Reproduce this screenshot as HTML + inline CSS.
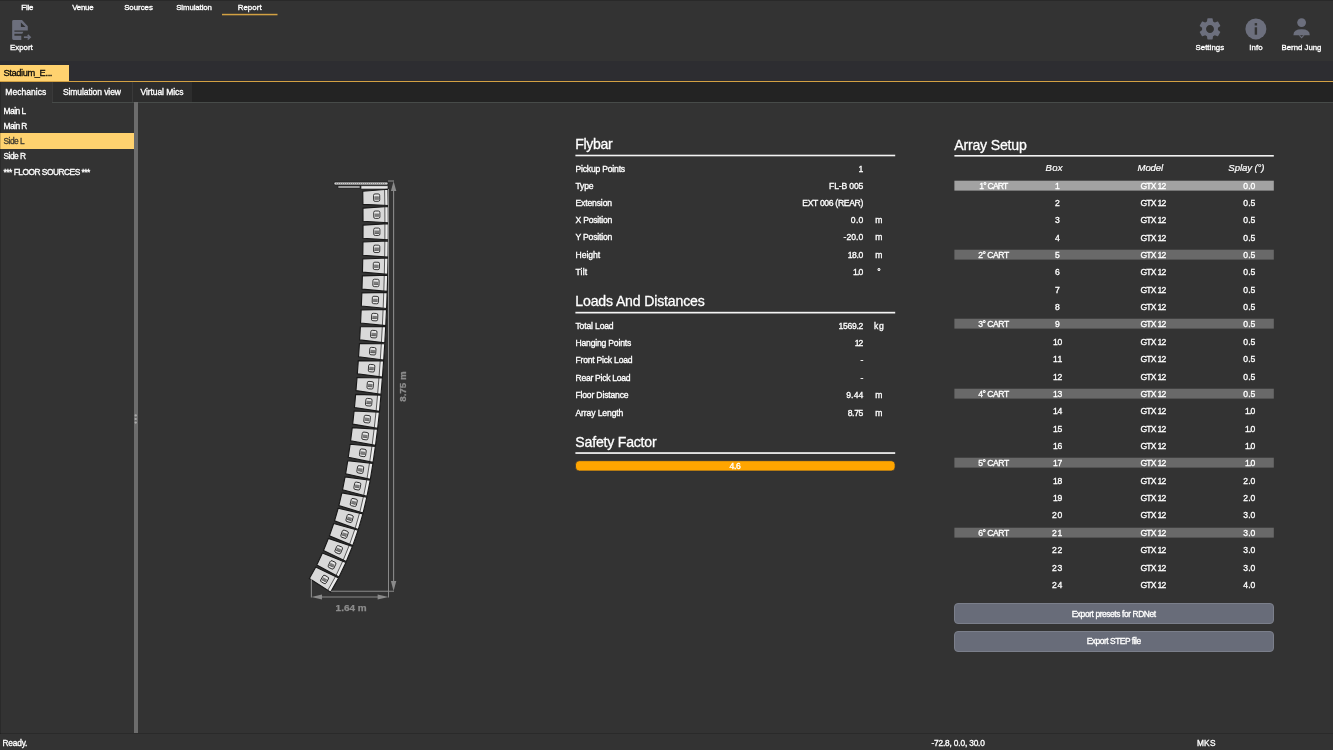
<!DOCTYPE html>
<html><head><meta charset="utf-8"><title>Report</title>
<style>
*{box-sizing:border-box;margin:0;padding:0}
html,body{width:1333px;height:750px;overflow:hidden;background:#333333}
body{font-family:"Liberation Sans",sans-serif;color:#fff;font-size:8px;position:relative}
#app{position:absolute;left:0;top:0;width:1333px;height:750px;will-change:transform;background:#333333}
.abs{position:absolute}
#docbar{left:0;top:61px;width:1333px;height:20px;background:#2d2d31}
#doctab{left:0;top:65px;width:69px;height:17px;background:#ffd26f}
#orange{left:0;top:81px;width:1333px;height:1px;background:#d3a143}
#subbar{left:0;top:82px;width:1333px;height:20px;background:#232323}
.stab{top:82px;height:20px;background:#2d2d2d;border-left:1px solid #3a3a3a}
.stab.act{background:#333333;height:21px;border:0}
#subline{left:52px;top:102px;width:1281px;height:1px;background:#474b49}
#sel{left:0;top:133px;width:134px;height:16px;background:#ffd26f}
#split{left:134px;top:102px;width:4px;height:632px;background:#6c6c6c}
#statline{left:0;top:733px;width:1333px;height:1px;background:#2a2a2a}
#sf{left:575px;top:461px;width:320px;height:10px;border-radius:4px;background:#ffa500}
.btn{position:absolute;left:954px;width:320px;height:21px;border-radius:4px;background:#686c79;border:1px solid #7b7f8b}
svg{position:absolute;left:0;top:0}
</style></head><body><div id="app">

<div id="docbar" class="abs"></div>
<div id="doctab" class="abs"></div>
<div id="orange" class="abs"></div>
<div id="subbar" class="abs"></div>
<div class="abs stab act" style="left:0;width:52px"></div>
<div class="abs stab" style="left:52px;width:80px"></div>
<div class="abs stab" style="left:132px;width:60px"></div>
<div id="subline" class="abs"></div>
<div id="sel" class="abs"></div>
<div id="split" class="abs"></div>
<div id="statline" class="abs"></div>
<div class="btn" style="top:603px"></div>
<div class="btn" style="top:631px"></div>

<svg width="1333" height="750" viewBox="0 0 1333 750" font-family="Liberation Sans, sans-serif">
 <!-- top dark edge -->
 <rect x="0" y="0" width="1333" height="0.7" fill="#262626"/>
 <!-- report underline -->
 <rect x="222" y="13.8" width="55.5" height="1.5" fill="#d3a143"/>
 <!-- left dark edge -->
 <rect x="0" y="82" width="0.7" height="652" fill="#000" opacity="0.25"/>
 <!-- splitter dots -->
 <ellipse cx="135.7" cy="415.4" rx="1.25" ry="1.05" fill="#aaaaaa"/>
 <ellipse cx="135.7" cy="419" rx="1.25" ry="1.05" fill="#aaaaaa"/>
 <ellipse cx="135.7" cy="422.6" rx="1.25" ry="1.05" fill="#aaaaaa"/>

 <!-- export icon -->
 <path fill="#6c6f7d" d="M13.6 19.9 H22 L27.8 26.2 V30.4 H14.4 V31.7 H23.3 L22.3 33.7 H14.4 V35.8 H21.3 V39.9 H13.6 Q12.16 39.9 12.16 38.5 V21.3 Q12.16 19.9 13.6 19.9 Z"/>
 <path d="M20.9 22.4 V27 H25.5 Z" fill="#2f2f30"/>
 <path d="M23.9 37.2 H29.6" stroke="#6c6f7d" stroke-width="1.7" fill="none"/>
 <path d="M27.7 34.9 L30.2 37.2 L27.7 39.5" stroke="#6c6f7d" stroke-width="1.5" fill="none" stroke-linejoin="miter"/>

 <!-- settings gear -->
 <g transform="translate(1196.75 15.65) scale(1.105)">
 <path fill="#6c6f7d" d="M19.14 12.94c.04-.3.06-.61.06-.94 0-.32-.02-.64-.07-.94l2.03-1.58a.49.49 0 0 0 .12-.61l-1.92-3.32a.488.488 0 0 0-.59-.22l-2.39.96c-.5-.38-1.03-.7-1.62-.94l-.36-2.54a.484.484 0 0 0-.48-.41h-3.84c-.24 0-.43.17-.47.41l-.36 2.54c-.59.24-1.13.57-1.62.94l-2.39-.96c-.22-.08-.47 0-.59.22L2.74 8.87c-.12.21-.08.47.12.61l2.03 1.58c-.05.3-.09.63-.09.94s.02.64.07.94l-2.03 1.58a.49.49 0 0 0-.12.61l1.92 3.32c.12.22.37.29.59.22l2.39-.96c.5.38 1.03.7 1.62.94l.36 2.54c.05.24.24.41.48.41h3.84c.24 0 .44-.17.47-.41l.36-2.54c.59-.24 1.13-.56 1.62-.94l2.39.96c.22.08.47 0 .59-.22l1.92-3.32c.12-.22.07-.47-.12-.61l-2.01-1.58zM12 15.6c-1.98 0-3.6-1.62-3.6-3.6s1.62-3.6 3.6-3.6 3.6 1.62 3.6 3.6-1.62 3.6-3.6 3.6z"/>
 </g>
 <!-- info -->
 <circle cx="1255.9" cy="28.9" r="10.5" fill="#6c6f7d"/>
 <rect x="1254.7" y="27.3" width="2.4" height="7.4" fill="#333"/>
 <rect x="1254.7" y="23.1" width="2.4" height="2.4" fill="#333"/>
 <!-- user -->
 <circle cx="1301.6" cy="22.6" r="4.4" fill="#6c6f7d"/>
 <path d="M1293.4 35.2 Q1293.4 29.3 1301.6 29.3 Q1309.8 29.3 1309.8 35.2 Z" fill="#6c6f7d"/>
 <path d="M1298.6 35.2 H1304.6 L1301.6 38.4 Z" fill="#6c6f7d"/>
 <path d="M1300.1 35.2 H1303.1 L1301.6 36.9 Z" fill="#333"/>

 <!-- flybar -->
 <rect x="334" y="182" width="54" height="3" rx="1.2" fill="#cfcfcf" stroke="#1c1c1c" stroke-width="0.8"/>
 <line x1="336" y1="183.5" x2="386" y2="183.5" stroke="#888" stroke-width="0.8" stroke-dasharray="1 1"/>
 <rect x="361" y="185.8" width="27" height="3.2" fill="#e6e6e6" stroke="#1c1c1c" stroke-width="0.6"/>
 <rect x="338" y="186" width="22" height="2" fill="#d0d0d0" stroke="#1c1c1c" stroke-width="0.6"/>
 <polygon points="388.00,189.30 388.23,205.55 362.91,204.35 362.73,191.20" fill="#d9d9d9"/>
<polygon points="388.00,189.30 388.23,205.55 384.83,205.39 384.61,189.56" fill="#ececec"/>
<line x1="384.61" y1="189.56" x2="384.83" y2="205.39" stroke="#2a2a2a" stroke-width="0.75"/>
<polygon points="388.00,189.30 388.23,205.55 362.91,204.35 362.73,191.20" fill="none" stroke="#181818" stroke-width="1.15" stroke-linejoin="round"/>
<g transform="translate(376.62 197.63) rotate(-0.80)"><rect x="-3.1" y="-3.7" width="6.2" height="7.4" rx="1.5" fill="#e6e6e6" stroke="#1e1e1e" stroke-width="0.85"/><rect x="-2.3" y="-1.3" width="4.6" height="2.9" rx="0.5" fill="#7c7c7c"/><rect x="-2.3" y="1.3" width="4.6" height="0.6" fill="#444"/></g>
<polygon points="388.24,206.47 388.33,222.72 363.02,221.30 362.95,208.15" fill="#d9d9d9"/>
<polygon points="388.24,206.47 388.33,222.72 384.93,222.53 384.84,206.69" fill="#ececec"/>
<line x1="384.84" y1="206.69" x2="384.93" y2="222.53" stroke="#2a2a2a" stroke-width="0.75"/>
<polygon points="388.24,206.47 388.33,222.72 363.02,221.30 362.95,208.15" fill="none" stroke="#181818" stroke-width="1.15" stroke-linejoin="round"/>
<g transform="translate(376.78 214.70) rotate(-0.30)"><rect x="-3.1" y="-3.7" width="6.2" height="7.4" rx="1.5" fill="#e6e6e6" stroke="#1e1e1e" stroke-width="0.85"/><rect x="-2.3" y="-1.3" width="4.6" height="2.9" rx="0.5" fill="#7c7c7c"/><rect x="-2.3" y="1.3" width="4.6" height="0.6" fill="#444"/></g>
<polygon points="388.33,223.64 388.27,239.89 362.98,238.25 363.02,225.10" fill="#d9d9d9"/>
<polygon points="388.33,223.64 388.27,239.89 384.87,239.67 384.93,223.83" fill="#ececec"/>
<line x1="384.93" y1="223.83" x2="384.87" y2="239.67" stroke="#2a2a2a" stroke-width="0.75"/>
<polygon points="388.33,223.64 388.27,239.89 362.98,238.25 363.02,225.10" fill="none" stroke="#181818" stroke-width="1.15" stroke-linejoin="round"/>
<g transform="translate(376.80 231.77) rotate(0.20)"><rect x="-3.1" y="-3.7" width="6.2" height="7.4" rx="1.5" fill="#e6e6e6" stroke="#1e1e1e" stroke-width="0.85"/><rect x="-2.3" y="-1.3" width="4.6" height="2.9" rx="0.5" fill="#7c7c7c"/><rect x="-2.3" y="1.3" width="4.6" height="0.6" fill="#444"/></g>
<polygon points="388.27,240.81 388.07,257.06 362.79,255.20 362.95,242.05" fill="#d9d9d9"/>
<polygon points="388.27,240.81 388.07,257.06 384.67,256.81 384.86,240.97" fill="#ececec"/>
<line x1="384.86" y1="240.97" x2="384.67" y2="256.81" stroke="#2a2a2a" stroke-width="0.75"/>
<polygon points="388.27,240.81 388.07,257.06 362.79,255.20 362.95,242.05" fill="none" stroke="#181818" stroke-width="1.15" stroke-linejoin="round"/>
<g transform="translate(376.67 248.84) rotate(0.70)"><rect x="-3.1" y="-3.7" width="6.2" height="7.4" rx="1.5" fill="#e6e6e6" stroke="#1e1e1e" stroke-width="0.85"/><rect x="-2.3" y="-1.3" width="4.6" height="2.9" rx="0.5" fill="#7c7c7c"/><rect x="-2.3" y="1.3" width="4.6" height="0.6" fill="#444"/></g>
<polygon points="388.05,257.98 387.71,274.22 362.45,272.15 362.73,258.99" fill="#d9d9d9"/>
<polygon points="388.05,257.98 387.71,274.22 384.32,273.94 384.65,258.11" fill="#ececec"/>
<line x1="384.65" y1="258.11" x2="384.32" y2="273.94" stroke="#2a2a2a" stroke-width="0.75"/>
<polygon points="388.05,257.98 387.71,274.22 362.45,272.15 362.73,258.99" fill="none" stroke="#181818" stroke-width="1.15" stroke-linejoin="round"/>
<g transform="translate(376.38 265.91) rotate(1.20)"><rect x="-3.1" y="-3.7" width="6.2" height="7.4" rx="1.5" fill="#e6e6e6" stroke="#1e1e1e" stroke-width="0.85"/><rect x="-2.3" y="-1.3" width="4.6" height="2.9" rx="0.5" fill="#7c7c7c"/><rect x="-2.3" y="1.3" width="4.6" height="0.6" fill="#444"/></g>
<polygon points="387.69,275.14 387.21,291.39 361.97,289.09 362.36,275.94" fill="#d9d9d9"/>
<polygon points="387.69,275.14 387.21,291.39 383.82,291.08 384.29,275.25" fill="#ececec"/>
<line x1="384.29" y1="275.25" x2="383.82" y2="291.08" stroke="#2a2a2a" stroke-width="0.75"/>
<polygon points="387.69,275.14 387.21,291.39 361.97,289.09 362.36,275.94" fill="none" stroke="#181818" stroke-width="1.15" stroke-linejoin="round"/>
<g transform="translate(375.95 282.97) rotate(1.70)"><rect x="-3.1" y="-3.7" width="6.2" height="7.4" rx="1.5" fill="#e6e6e6" stroke="#1e1e1e" stroke-width="0.85"/><rect x="-2.3" y="-1.3" width="4.6" height="2.9" rx="0.5" fill="#7c7c7c"/><rect x="-2.3" y="1.3" width="4.6" height="0.6" fill="#444"/></g>
<polygon points="387.18,292.31 386.56,308.54 361.33,306.03 361.84,292.88" fill="#d9d9d9"/>
<polygon points="387.18,292.31 386.56,308.54 383.17,308.20 383.77,292.38" fill="#ececec"/>
<line x1="383.77" y1="292.38" x2="383.17" y2="308.20" stroke="#2a2a2a" stroke-width="0.75"/>
<polygon points="387.18,292.31 386.56,308.54 361.33,306.03 361.84,292.88" fill="none" stroke="#181818" stroke-width="1.15" stroke-linejoin="round"/>
<g transform="translate(375.37 300.03) rotate(2.20)"><rect x="-3.1" y="-3.7" width="6.2" height="7.4" rx="1.5" fill="#e6e6e6" stroke="#1e1e1e" stroke-width="0.85"/><rect x="-2.3" y="-1.3" width="4.6" height="2.9" rx="0.5" fill="#7c7c7c"/><rect x="-2.3" y="1.3" width="4.6" height="0.6" fill="#444"/></g>
<polygon points="386.52,309.46 385.75,325.69 360.55,322.96 361.17,309.82" fill="#d9d9d9"/>
<polygon points="386.52,309.46 385.75,325.69 382.37,325.33 383.11,309.51" fill="#ececec"/>
<line x1="383.11" y1="309.51" x2="382.37" y2="325.33" stroke="#2a2a2a" stroke-width="0.75"/>
<polygon points="386.52,309.46 385.75,325.69 360.55,322.96 361.17,309.82" fill="none" stroke="#181818" stroke-width="1.15" stroke-linejoin="round"/>
<g transform="translate(374.65 317.09) rotate(2.70)"><rect x="-3.1" y="-3.7" width="6.2" height="7.4" rx="1.5" fill="#e6e6e6" stroke="#1e1e1e" stroke-width="0.85"/><rect x="-2.3" y="-1.3" width="4.6" height="2.9" rx="0.5" fill="#7c7c7c"/><rect x="-2.3" y="1.3" width="4.6" height="0.6" fill="#444"/></g>
<polygon points="385.71,326.61 384.80,342.84 359.63,339.88 360.36,326.75" fill="#d9d9d9"/>
<polygon points="385.71,326.61 384.80,342.84 381.42,342.44 382.30,326.63" fill="#ececec"/>
<line x1="382.30" y1="326.63" x2="381.42" y2="342.44" stroke="#2a2a2a" stroke-width="0.75"/>
<polygon points="385.71,326.61 384.80,342.84 359.63,339.88 360.36,326.75" fill="none" stroke="#181818" stroke-width="1.15" stroke-linejoin="round"/>
<g transform="translate(373.77 334.13) rotate(3.20)"><rect x="-3.1" y="-3.7" width="6.2" height="7.4" rx="1.5" fill="#e6e6e6" stroke="#1e1e1e" stroke-width="0.85"/><rect x="-2.3" y="-1.3" width="4.6" height="2.9" rx="0.5" fill="#7c7c7c"/><rect x="-2.3" y="1.3" width="4.6" height="0.6" fill="#444"/></g>
<polygon points="384.75,343.76 383.70,359.97 358.55,356.80 359.40,343.67" fill="#d9d9d9"/>
<polygon points="384.75,343.76 383.70,359.97 380.32,359.55 381.34,343.74" fill="#ececec"/>
<line x1="381.34" y1="343.74" x2="380.32" y2="359.55" stroke="#2a2a2a" stroke-width="0.75"/>
<polygon points="384.75,343.76 383.70,359.97 358.55,356.80 359.40,343.67" fill="none" stroke="#181818" stroke-width="1.15" stroke-linejoin="round"/>
<g transform="translate(372.74 351.17) rotate(3.70)"><rect x="-3.1" y="-3.7" width="6.2" height="7.4" rx="1.5" fill="#e6e6e6" stroke="#1e1e1e" stroke-width="0.85"/><rect x="-2.3" y="-1.3" width="4.6" height="2.9" rx="0.5" fill="#7c7c7c"/><rect x="-2.3" y="1.3" width="4.6" height="0.6" fill="#444"/></g>
<polygon points="383.63,360.89 382.44,377.10 357.33,373.70 358.29,360.58" fill="#d9d9d9"/>
<polygon points="383.63,360.89 382.44,377.10 379.07,376.64 380.23,360.85" fill="#ececec"/>
<line x1="380.23" y1="360.85" x2="379.07" y2="376.64" stroke="#2a2a2a" stroke-width="0.75"/>
<polygon points="383.63,360.89 382.44,377.10 357.33,373.70 358.29,360.58" fill="none" stroke="#181818" stroke-width="1.15" stroke-linejoin="round"/>
<g transform="translate(371.57 368.20) rotate(4.20)"><rect x="-3.1" y="-3.7" width="6.2" height="7.4" rx="1.5" fill="#e6e6e6" stroke="#1e1e1e" stroke-width="0.85"/><rect x="-2.3" y="-1.3" width="4.6" height="2.9" rx="0.5" fill="#7c7c7c"/><rect x="-2.3" y="1.3" width="4.6" height="0.6" fill="#444"/></g>
<polygon points="382.37,378.01 381.04,394.21 355.95,390.59 357.03,377.48" fill="#d9d9d9"/>
<polygon points="382.37,378.01 381.04,394.21 377.67,393.72 378.97,377.94" fill="#ececec"/>
<line x1="378.97" y1="377.94" x2="377.67" y2="393.72" stroke="#2a2a2a" stroke-width="0.75"/>
<polygon points="382.37,378.01 381.04,394.21 355.95,390.59 357.03,377.48" fill="none" stroke="#181818" stroke-width="1.15" stroke-linejoin="round"/>
<g transform="translate(370.24 385.22) rotate(4.70)"><rect x="-3.1" y="-3.7" width="6.2" height="7.4" rx="1.5" fill="#e6e6e6" stroke="#1e1e1e" stroke-width="0.85"/><rect x="-2.3" y="-1.3" width="4.6" height="2.9" rx="0.5" fill="#7c7c7c"/><rect x="-2.3" y="1.3" width="4.6" height="0.6" fill="#444"/></g>
<polygon points="380.96,395.13 379.49,411.31 354.44,407.48 355.63,394.37" fill="#d9d9d9"/>
<polygon points="380.96,395.13 379.49,411.31 376.13,410.79 377.56,395.02" fill="#ececec"/>
<line x1="377.56" y1="395.02" x2="376.13" y2="410.79" stroke="#2a2a2a" stroke-width="0.75"/>
<polygon points="380.96,395.13 379.49,411.31 354.44,407.48 355.63,394.37" fill="none" stroke="#181818" stroke-width="1.15" stroke-linejoin="round"/>
<g transform="translate(368.77 402.23) rotate(5.20)"><rect x="-3.1" y="-3.7" width="6.2" height="7.4" rx="1.5" fill="#e6e6e6" stroke="#1e1e1e" stroke-width="0.85"/><rect x="-2.3" y="-1.3" width="4.6" height="2.9" rx="0.5" fill="#7c7c7c"/><rect x="-2.3" y="1.3" width="4.6" height="0.6" fill="#444"/></g>
<polygon points="379.40,412.22 377.65,428.38 352.66,424.11 354.08,411.03" fill="#d9d9d9"/>
<polygon points="379.40,412.22 377.65,428.38 374.29,427.81 376.00,412.06" fill="#ececec"/>
<line x1="376.00" y1="412.06" x2="374.29" y2="427.81" stroke="#2a2a2a" stroke-width="0.75"/>
<polygon points="379.40,412.22 377.65,428.38 352.66,424.11 354.08,411.03" fill="none" stroke="#181818" stroke-width="1.15" stroke-linejoin="round"/>
<g transform="translate(367.09 419.11) rotate(6.20)"><rect x="-3.1" y="-3.7" width="6.2" height="7.4" rx="1.5" fill="#e6e6e6" stroke="#1e1e1e" stroke-width="0.85"/><rect x="-2.3" y="-1.3" width="4.6" height="2.9" rx="0.5" fill="#7c7c7c"/><rect x="-2.3" y="1.3" width="4.6" height="0.6" fill="#444"/></g>
<polygon points="377.54,429.29 375.51,445.42 350.60,440.71 352.25,427.66" fill="#d9d9d9"/>
<polygon points="377.54,429.29 375.51,445.42 372.16,444.78 374.14,429.07" fill="#ececec"/>
<line x1="374.14" y1="429.07" x2="372.16" y2="444.78" stroke="#2a2a2a" stroke-width="0.75"/>
<polygon points="377.54,429.29 375.51,445.42 350.60,440.71 352.25,427.66" fill="none" stroke="#181818" stroke-width="1.15" stroke-linejoin="round"/>
<g transform="translate(365.11 435.96) rotate(7.20)"><rect x="-3.1" y="-3.7" width="6.2" height="7.4" rx="1.5" fill="#e6e6e6" stroke="#1e1e1e" stroke-width="0.85"/><rect x="-2.3" y="-1.3" width="4.6" height="2.9" rx="0.5" fill="#7c7c7c"/><rect x="-2.3" y="1.3" width="4.6" height="0.6" fill="#444"/></g>
<polygon points="375.39,446.33 373.07,462.41 348.25,457.27 350.12,444.25" fill="#d9d9d9"/>
<polygon points="375.39,446.33 373.07,462.41 369.73,461.72 371.99,446.05" fill="#ececec"/>
<line x1="371.99" y1="446.05" x2="369.73" y2="461.72" stroke="#2a2a2a" stroke-width="0.75"/>
<polygon points="375.39,446.33 373.07,462.41 348.25,457.27 350.12,444.25" fill="none" stroke="#181818" stroke-width="1.15" stroke-linejoin="round"/>
<g transform="translate(362.84 452.78) rotate(8.20)"><rect x="-3.1" y="-3.7" width="6.2" height="7.4" rx="1.5" fill="#e6e6e6" stroke="#1e1e1e" stroke-width="0.85"/><rect x="-2.3" y="-1.3" width="4.6" height="2.9" rx="0.5" fill="#7c7c7c"/><rect x="-2.3" y="1.3" width="4.6" height="0.6" fill="#444"/></g>
<polygon points="372.93,463.32 370.33,479.36 345.61,473.79 347.71,460.80" fill="#d9d9d9"/>
<polygon points="372.93,463.32 370.33,479.36 367.01,478.61 369.54,462.98" fill="#ececec"/>
<line x1="369.54" y1="462.98" x2="367.01" y2="478.61" stroke="#2a2a2a" stroke-width="0.75"/>
<polygon points="372.93,463.32 370.33,479.36 345.61,473.79 347.71,460.80" fill="none" stroke="#181818" stroke-width="1.15" stroke-linejoin="round"/>
<g transform="translate(360.27 469.55) rotate(9.20)"><rect x="-3.1" y="-3.7" width="6.2" height="7.4" rx="1.5" fill="#e6e6e6" stroke="#1e1e1e" stroke-width="0.85"/><rect x="-2.3" y="-1.3" width="4.6" height="2.9" rx="0.5" fill="#7c7c7c"/><rect x="-2.3" y="1.3" width="4.6" height="0.6" fill="#444"/></g>
<polygon points="370.18,480.27 367.02,496.21 342.50,489.78 345.06,476.87" fill="#d9d9d9"/>
<polygon points="370.18,480.27 367.02,496.21 363.73,495.34 366.80,479.81" fill="#ececec"/>
<line x1="366.80" y1="479.81" x2="363.73" y2="495.34" stroke="#2a2a2a" stroke-width="0.75"/>
<polygon points="370.18,480.27 367.02,496.21 342.50,489.78 345.06,476.87" fill="none" stroke="#181818" stroke-width="1.15" stroke-linejoin="round"/>
<g transform="translate(357.31 486.05) rotate(11.20)"><rect x="-3.1" y="-3.7" width="6.2" height="7.4" rx="1.5" fill="#e6e6e6" stroke="#1e1e1e" stroke-width="0.85"/><rect x="-2.3" y="-1.3" width="4.6" height="2.9" rx="0.5" fill="#7c7c7c"/><rect x="-2.3" y="1.3" width="4.6" height="0.6" fill="#444"/></g>
<polygon points="366.83,497.11 363.12,512.93 338.84,505.65 341.85,492.84" fill="#d9d9d9"/>
<polygon points="366.83,497.11 363.12,512.93 359.86,511.95 363.47,496.54" fill="#ececec"/>
<line x1="363.47" y1="496.54" x2="359.86" y2="511.95" stroke="#2a2a2a" stroke-width="0.75"/>
<polygon points="366.83,497.11 363.12,512.93 338.84,505.65 341.85,492.84" fill="none" stroke="#181818" stroke-width="1.15" stroke-linejoin="round"/>
<g transform="translate(353.77 502.44) rotate(13.20)"><rect x="-3.1" y="-3.7" width="6.2" height="7.4" rx="1.5" fill="#e6e6e6" stroke="#1e1e1e" stroke-width="0.85"/><rect x="-2.3" y="-1.3" width="4.6" height="2.9" rx="0.5" fill="#7c7c7c"/><rect x="-2.3" y="1.3" width="4.6" height="0.6" fill="#444"/></g>
<polygon points="362.90,513.82 358.36,529.43 334.50,520.88 338.17,508.25" fill="#d9d9d9"/>
<polygon points="362.90,513.82 358.36,529.43 355.16,528.28 359.57,513.07" fill="#ececec"/>
<line x1="359.57" y1="513.07" x2="355.16" y2="528.28" stroke="#2a2a2a" stroke-width="0.75"/>
<polygon points="362.90,513.82 358.36,529.43 334.50,520.88 338.17,508.25" fill="none" stroke="#181818" stroke-width="1.15" stroke-linejoin="round"/>
<g transform="translate(349.57 518.46) rotate(16.20)"><rect x="-3.1" y="-3.7" width="6.2" height="7.4" rx="1.5" fill="#e6e6e6" stroke="#1e1e1e" stroke-width="0.85"/><rect x="-2.3" y="-1.3" width="4.6" height="2.9" rx="0.5" fill="#7c7c7c"/><rect x="-2.3" y="1.3" width="4.6" height="0.6" fill="#444"/></g>
<polygon points="358.09,530.31 352.75,545.65 329.36,535.87 333.69,523.45" fill="#d9d9d9"/>
<polygon points="358.09,530.31 352.75,545.65 349.60,544.34 354.81,529.38" fill="#ececec"/>
<line x1="354.81" y1="529.38" x2="349.60" y2="544.34" stroke="#2a2a2a" stroke-width="0.75"/>
<polygon points="358.09,530.31 352.75,545.65 329.36,535.87 333.69,523.45" fill="none" stroke="#181818" stroke-width="1.15" stroke-linejoin="round"/>
<g transform="translate(344.54 534.24) rotate(19.20)"><rect x="-3.1" y="-3.7" width="6.2" height="7.4" rx="1.5" fill="#e6e6e6" stroke="#1e1e1e" stroke-width="0.85"/><rect x="-2.3" y="-1.3" width="4.6" height="2.9" rx="0.5" fill="#7c7c7c"/><rect x="-2.3" y="1.3" width="4.6" height="0.6" fill="#444"/></g>
<polygon points="352.43,546.51 346.29,561.56 323.45,550.57 328.42,538.39" fill="#d9d9d9"/>
<polygon points="352.43,546.51 346.29,561.56 343.22,560.08 349.20,545.42" fill="#ececec"/>
<line x1="349.20" y1="545.42" x2="343.22" y2="560.08" stroke="#2a2a2a" stroke-width="0.75"/>
<polygon points="352.43,546.51 346.29,561.56 323.45,550.57 328.42,538.39" fill="none" stroke="#181818" stroke-width="1.15" stroke-linejoin="round"/>
<g transform="translate(338.69 549.74) rotate(22.20)"><rect x="-3.1" y="-3.7" width="6.2" height="7.4" rx="1.5" fill="#e6e6e6" stroke="#1e1e1e" stroke-width="0.85"/><rect x="-2.3" y="-1.3" width="4.6" height="2.9" rx="0.5" fill="#7c7c7c"/><rect x="-2.3" y="1.3" width="4.6" height="0.6" fill="#444"/></g>
<polygon points="345.93,562.41 339.01,577.11 316.78,564.94 322.38,553.03" fill="#d9d9d9"/>
<polygon points="345.93,562.41 339.01,577.11 336.02,575.47 342.76,561.15" fill="#ececec"/>
<line x1="342.76" y1="561.15" x2="336.02" y2="575.47" stroke="#2a2a2a" stroke-width="0.75"/>
<polygon points="345.93,562.41 339.01,577.11 316.78,564.94 322.38,553.03" fill="none" stroke="#181818" stroke-width="1.15" stroke-linejoin="round"/>
<g transform="translate(332.04 564.91) rotate(25.20)"><rect x="-3.1" y="-3.7" width="6.2" height="7.4" rx="1.5" fill="#e6e6e6" stroke="#1e1e1e" stroke-width="0.85"/><rect x="-2.3" y="-1.3" width="4.6" height="2.9" rx="0.5" fill="#7c7c7c"/><rect x="-2.3" y="1.3" width="4.6" height="0.6" fill="#444"/></g>
<polygon points="338.60,577.93 330.67,592.12 309.34,578.42 315.76,566.94" fill="#d9d9d9"/>
<polygon points="338.60,577.93 330.67,592.12 327.80,590.28 335.53,576.45" fill="#ececec"/>
<line x1="335.53" y1="576.45" x2="327.80" y2="590.28" stroke="#2a2a2a" stroke-width="0.75"/>
<polygon points="338.60,577.93 330.67,592.12 309.34,578.42 315.76,566.94" fill="none" stroke="#181818" stroke-width="1.15" stroke-linejoin="round"/>
<g transform="translate(324.57 579.46) rotate(29.20)"><rect x="-3.1" y="-3.7" width="6.2" height="7.4" rx="1.5" fill="#e6e6e6" stroke="#1e1e1e" stroke-width="0.85"/><rect x="-2.3" y="-1.3" width="4.6" height="2.9" rx="0.5" fill="#7c7c7c"/><rect x="-2.3" y="1.3" width="4.6" height="0.6" fill="#444"/></g>
 <!-- dims -->
 <g stroke="#8a8a8a" stroke-width="1.1" fill="none">
  <line x1="388" y1="181" x2="394" y2="181"/>
  <line x1="393.6" y1="188" x2="393.6" y2="583"/>
  <line x1="331" y1="591.3" x2="394" y2="591.3"/>
  <line x1="311.4" y1="579" x2="311.4" y2="597.5"/>
  <line x1="388.5" y1="189" x2="388.5" y2="597.5" stroke-width="1"/>
  <line x1="320" y1="597" x2="380" y2="597"/>
 </g>
 <g fill="#8a8a8a">
  <path d="M393.6 181.3 L396.3 191 L390.9 191 Z"/>
  <path d="M393.6 591 L396.3 581 L390.9 581 Z"/>
  <path d="M311.4 597 L322 594.6 L322 599.4 Z"/>
  <path d="M388.5 597 L377.6 594.6 L377.6 599.4 Z"/>
 </g>
 <text x="335.6" y="611" textLength="31" lengthAdjust="spacingAndGlyphs" font-weight="bold" font-size="8.8" fill="#8c8c8c" stroke="#8c8c8c" stroke-width="0.25">1.64 m</text>
 <text transform="translate(405.5 401.8) rotate(-90)" x="0" y="0" textLength="30.4" lengthAdjust="spacingAndGlyphs" font-weight="bold" font-size="8.8" fill="#8c8c8c" stroke="#8c8c8c" stroke-width="0.25">8.75 m</text>

 <rect x="575.5" y="460.7" width="319.6" height="10.3" rx="3.9" fill="#ffa500" stroke="#2b2e38" stroke-width="0.7"/>
 <!-- title underlines -->
 <rect x="575.4" y="154.7" width="319.8" height="1.6" fill="#f4f4f4"/>
 <rect x="575.4" y="311.8" width="319.8" height="1.7" fill="#f4f4f4"/>
 <rect x="575.4" y="452.2" width="319.8" height="1.7" fill="#f4f4f4"/>
 <rect x="954.4" y="155" width="319.4" height="1.6" fill="#f4f4f4"/>
 <rect x="954.4" y="180.70" width="319.4" height="9.9" fill="#a2a2a2"/>
<rect x="954.4" y="249.70" width="319.4" height="9.9" fill="#696969"/>
<rect x="954.4" y="318.70" width="319.4" height="9.9" fill="#696969"/>
<rect x="954.4" y="388.70" width="319.4" height="9.9" fill="#696969"/>
<rect x="954.4" y="457.70" width="319.4" height="9.9" fill="#696969"/>
<rect x="954.4" y="527.70" width="319.4" height="9.9" fill="#696969"/>
 <text x="21.25" textLength="12.20" lengthAdjust="spacing" y="10" font-size="7.85" fill="#fff" stroke="#fff" stroke-width="0.32" >File</text>
<text x="72.15" textLength="21.40" lengthAdjust="spacing" y="10" font-size="7.85" fill="#fff" stroke="#fff" stroke-width="0.32" >Venue</text>
<text x="124.15" textLength="28.70" lengthAdjust="spacing" y="10" font-size="7.85" fill="#fff" stroke="#fff" stroke-width="0.32" >Sources</text>
<text x="176.15" textLength="35.80" lengthAdjust="spacing" y="10" font-size="7.85" fill="#fff" stroke="#fff" stroke-width="0.32" >Simulation</text>
<text x="237.65" textLength="24.00" lengthAdjust="spacing" y="10" font-size="7.85" fill="#fff" stroke="#fff" stroke-width="0.32" >Report</text>
<text x="10.00" textLength="22.75" lengthAdjust="spacing" y="50" font-size="7.85" fill="#fff" stroke="#fff" stroke-width="0.32" >Export</text>
<text x="1195.45" textLength="28.70" lengthAdjust="spacing" y="50" font-size="7.85" fill="#fff" stroke="#fff" stroke-width="0.32" >Settings</text>
<text x="1249.35" textLength="13.20" lengthAdjust="spacing" y="50" font-size="7.85" fill="#fff" stroke="#fff" stroke-width="0.32" >Info</text>
<text x="1281.55" textLength="39.90" lengthAdjust="spacing" y="50" font-size="7.85" fill="#fff" stroke="#fff" stroke-width="0.32" >Bernd Jung</text>
<text x="3.40" textLength="49.05" lengthAdjust="spacing" y="76" font-size="9.3" fill="#0a0a0a" stroke="#0a0a0a" stroke-width="0.3" >Stadium_E...</text>
<text x="5.25" textLength="41.00" lengthAdjust="spacing" y="95" font-size="8.5" fill="#fff" stroke="#fff" stroke-width="0.32" >Mechanics</text>
<text x="62.95" textLength="58.00" lengthAdjust="spacing" y="95" font-size="8.5" fill="#fff" stroke="#fff" stroke-width="0.32" >Simulation view</text>
<text x="140.45" textLength="43.00" lengthAdjust="spacing" y="95" font-size="8.5" fill="#fff" stroke="#fff" stroke-width="0.32" >Virtual Mics</text>
<text x="3.55" textLength="22.70" lengthAdjust="spacing" y="114" font-size="8.4" fill="#fff" stroke="#fff" stroke-width="0.32" >Main L</text>
<text x="3.55" textLength="23.80" lengthAdjust="spacing" y="129" font-size="8.4" fill="#fff" stroke="#fff" stroke-width="0.32" >Main R</text>
<text x="3.55" textLength="21.00" lengthAdjust="spacing" y="144" font-size="8.4" fill="#3f3b30" stroke="#3f3b30" stroke-width="0.3" >Side L</text>
<text x="3.55" textLength="22.40" lengthAdjust="spacing" y="159" font-size="8.4" fill="#fff" stroke="#fff" stroke-width="0.32" >Side R</text>
<text x="3.55" textLength="86.80" lengthAdjust="spacing" y="175" font-size="8.4" fill="#fff" stroke="#fff" stroke-width="0.32" >*** FLOOR SOURCES ***</text>
<text x="2.55" textLength="24.80" lengthAdjust="spacing" y="746" font-size="8.3" fill="#fff" stroke="#fff" stroke-width="0.32" >Ready.</text>
<text x="931.45" textLength="53.40" lengthAdjust="spacing" y="746" font-size="8.3" fill="#fff" stroke="#fff" stroke-width="0.32" >-72.8, 0.0, 30.0</text>
<text x="1196.95" textLength="18.50" lengthAdjust="spacing" y="746" font-size="8.3" fill="#fff" stroke="#fff" stroke-width="0.32" >MKS</text>
<text x="575.35" textLength="37.30" lengthAdjust="spacing" y="149" font-size="14.1" fill="#fff" stroke="#fff" stroke-width="0.28" >Flybar</text>
<text x="575.35" textLength="129.40" lengthAdjust="spacing" y="306" font-size="14.1" fill="#fff" stroke="#fff" stroke-width="0.28" >Loads And Distances</text>
<text x="575.35" textLength="81.30" lengthAdjust="spacing" y="447" font-size="14.1" fill="#fff" stroke="#fff" stroke-width="0.28" >Safety Factor</text>
<text x="954.15" textLength="72.70" lengthAdjust="spacing" y="150" font-size="14.1" fill="#fff" stroke="#fff" stroke-width="0.28" >Array Setup</text>
<text x="575.45" textLength="49.70" lengthAdjust="spacing" y="172" font-size="8.6" fill="#fff" stroke="#fff" stroke-width="0.32" >Pickup Points</text>
<text x="863.35" text-anchor="end" y="172" font-size="8.6" fill="#fff" stroke="#fff" stroke-width="0.32" >1</text>
<text x="575.45" textLength="18.20" lengthAdjust="spacing" y="189" font-size="8.6" fill="#fff" stroke="#fff" stroke-width="0.32" >Type</text>
<text x="829.05" textLength="34.30" lengthAdjust="spacing" y="189" font-size="8.6" fill="#fff" stroke="#fff" stroke-width="0.32" >FL-B 005</text>
<text x="575.45" textLength="36.60" lengthAdjust="spacing" y="206" font-size="8.6" fill="#fff" stroke="#fff" stroke-width="0.32" >Extension</text>
<text x="802.25" textLength="61.10" lengthAdjust="spacing" y="206" font-size="8.6" fill="#fff" stroke="#fff" stroke-width="0.32" >EXT 006 (REAR)</text>
<text x="575.45" textLength="36.90" lengthAdjust="spacing" y="223" font-size="8.6" fill="#fff" stroke="#fff" stroke-width="0.32" >X Position</text>
<text x="850.85" textLength="12.50" lengthAdjust="spacing" y="223" font-size="8.6" fill="#fff" stroke="#fff" stroke-width="0.32" >0.0</text>
<text x="875.35" textLength="7.30" lengthAdjust="spacing" y="223" font-size="8.6" fill="#fff" stroke="#fff" stroke-width="0.32" >m</text>
<text x="575.45" textLength="36.90" lengthAdjust="spacing" y="240" font-size="8.6" fill="#fff" stroke="#fff" stroke-width="0.32" >Y Position</text>
<text x="843.45" textLength="19.90" lengthAdjust="spacing" y="240" font-size="8.6" fill="#fff" stroke="#fff" stroke-width="0.32" >-20.0</text>
<text x="875.35" textLength="7.30" lengthAdjust="spacing" y="240" font-size="8.6" fill="#fff" stroke="#fff" stroke-width="0.32" >m</text>
<text x="575.45" textLength="24.80" lengthAdjust="spacing" y="258" font-size="8.6" fill="#fff" stroke="#fff" stroke-width="0.32" >Height</text>
<text x="847.65" textLength="15.70" lengthAdjust="spacing" y="258" font-size="8.6" fill="#fff" stroke="#fff" stroke-width="0.32" >18.0</text>
<text x="875.35" textLength="7.30" lengthAdjust="spacing" y="258" font-size="8.6" fill="#fff" stroke="#fff" stroke-width="0.32" >m</text>
<text x="575.45" textLength="11.70" lengthAdjust="spacing" y="275" font-size="8.6" fill="#fff" stroke="#fff" stroke-width="0.32" >Tilt</text>
<text x="852.95" textLength="10.40" lengthAdjust="spacing" y="275" font-size="8.6" fill="#fff" stroke="#fff" stroke-width="0.32" >1.0</text>
<text x="879.00" text-anchor="middle" y="275" font-size="8.6" fill="#fff" stroke="#fff" stroke-width="0.32" >°</text>
<text x="575.45" textLength="38.20" lengthAdjust="spacing" y="329" font-size="8.6" fill="#fff" stroke="#fff" stroke-width="0.32" >Total Load</text>
<text x="838.55" textLength="24.80" lengthAdjust="spacing" y="329" font-size="8.6" fill="#fff" stroke="#fff" stroke-width="0.32" >1569.2</text>
<text x="874.05" textLength="9.70" lengthAdjust="spacing" y="329" font-size="8.6" fill="#fff" stroke="#fff" stroke-width="0.32" >kg</text>
<text x="575.45" textLength="55.80" lengthAdjust="spacing" y="346" font-size="8.6" fill="#fff" stroke="#fff" stroke-width="0.32" >Hanging Points</text>
<text x="854.75" textLength="8.60" lengthAdjust="spacing" y="346" font-size="8.6" fill="#fff" stroke="#fff" stroke-width="0.32" >12</text>
<text x="575.45" textLength="57.10" lengthAdjust="spacing" y="363" font-size="8.6" fill="#fff" stroke="#fff" stroke-width="0.32" >Front Pick Load</text>
<text x="863.35" text-anchor="end" y="363" font-size="8.6" fill="#fff" stroke="#fff" stroke-width="0.32" >-</text>
<text x="575.45" textLength="55.20" lengthAdjust="spacing" y="381" font-size="8.6" fill="#fff" stroke="#fff" stroke-width="0.32" >Rear Pick Load</text>
<text x="863.35" text-anchor="end" y="381" font-size="8.6" fill="#fff" stroke="#fff" stroke-width="0.32" >-</text>
<text x="575.45" textLength="53.10" lengthAdjust="spacing" y="398" font-size="8.6" fill="#fff" stroke="#fff" stroke-width="0.32" >Floor Distance</text>
<text x="846.15" textLength="17.20" lengthAdjust="spacing" y="398" font-size="8.6" fill="#fff" stroke="#fff" stroke-width="0.32" >9.44</text>
<text x="875.35" textLength="7.30" lengthAdjust="spacing" y="398" font-size="8.6" fill="#fff" stroke="#fff" stroke-width="0.32" >m</text>
<text x="575.45" textLength="47.90" lengthAdjust="spacing" y="416" font-size="8.6" fill="#fff" stroke="#fff" stroke-width="0.32" >Array Length</text>
<text x="847.65" textLength="15.70" lengthAdjust="spacing" y="416" font-size="8.6" fill="#fff" stroke="#fff" stroke-width="0.32" >8.75</text>
<text x="875.35" textLength="7.30" lengthAdjust="spacing" y="416" font-size="8.6" fill="#fff" stroke="#fff" stroke-width="0.32" >m</text>
<text x="735.00" text-anchor="middle" letter-spacing="-0.3" y="469" font-size="8.6" fill="#fff" stroke="#fff" stroke-width="0.32" >4.6</text>
<text x="1045.55" textLength="17.00" lengthAdjust="spacing" y="171" font-size="9.6" fill="#fff" stroke="#fff" stroke-width="0.2" font-style="italic">Box</text>
<text x="1137.55" textLength="25.50" lengthAdjust="spacing" y="171" font-size="9.6" fill="#fff" stroke="#fff" stroke-width="0.2" font-style="italic">Model</text>
<text x="1228.35" textLength="36.10" lengthAdjust="spacing" y="171" font-size="9.6" fill="#fff" stroke="#fff" stroke-width="0.2" font-style="italic">Splay (°)</text>
<text x="979.25" textLength="29.10" lengthAdjust="spacing" y="189" font-size="8.6" fill="#fff" stroke="#fff" stroke-width="0.32" >1° CART</text>
<text x="1057.50" text-anchor="middle" y="189" font-size="8.6" fill="#fff" stroke="#fff" stroke-width="0.32" >1</text>
<text x="1140.45" textLength="25.80" lengthAdjust="spacing" y="189" font-size="8.6" fill="#fff" stroke="#fff" stroke-width="0.32" >GTX 12</text>
<text x="1243.35" textLength="12.00" lengthAdjust="spacing" y="189" font-size="8.6" fill="#fff" stroke="#fff" stroke-width="0.32" >0.0</text>
<text x="1057.50" text-anchor="middle" y="206" font-size="8.6" fill="#fff" stroke="#fff" stroke-width="0.32" >2</text>
<text x="1140.45" textLength="25.80" lengthAdjust="spacing" y="206" font-size="8.6" fill="#fff" stroke="#fff" stroke-width="0.32" >GTX 12</text>
<text x="1243.35" textLength="12.00" lengthAdjust="spacing" y="206" font-size="8.6" fill="#fff" stroke="#fff" stroke-width="0.32" >0.5</text>
<text x="1057.50" text-anchor="middle" y="223" font-size="8.6" fill="#fff" stroke="#fff" stroke-width="0.32" >3</text>
<text x="1140.45" textLength="25.80" lengthAdjust="spacing" y="223" font-size="8.6" fill="#fff" stroke="#fff" stroke-width="0.32" >GTX 12</text>
<text x="1243.35" textLength="12.00" lengthAdjust="spacing" y="223" font-size="8.6" fill="#fff" stroke="#fff" stroke-width="0.32" >0.5</text>
<text x="1057.50" text-anchor="middle" y="241" font-size="8.6" fill="#fff" stroke="#fff" stroke-width="0.32" >4</text>
<text x="1140.45" textLength="25.80" lengthAdjust="spacing" y="241" font-size="8.6" fill="#fff" stroke="#fff" stroke-width="0.32" >GTX 12</text>
<text x="1243.35" textLength="12.00" lengthAdjust="spacing" y="241" font-size="8.6" fill="#fff" stroke="#fff" stroke-width="0.32" >0.5</text>
<text x="978.15" textLength="31.00" lengthAdjust="spacing" y="258" font-size="8.6" fill="#fff" stroke="#fff" stroke-width="0.32" >2° CART</text>
<text x="1057.50" text-anchor="middle" y="258" font-size="8.6" fill="#fff" stroke="#fff" stroke-width="0.32" >5</text>
<text x="1140.45" textLength="25.80" lengthAdjust="spacing" y="258" font-size="8.6" fill="#fff" stroke="#fff" stroke-width="0.32" >GTX 12</text>
<text x="1243.35" textLength="12.00" lengthAdjust="spacing" y="258" font-size="8.6" fill="#fff" stroke="#fff" stroke-width="0.32" >0.5</text>
<text x="1057.50" text-anchor="middle" y="275" font-size="8.6" fill="#fff" stroke="#fff" stroke-width="0.32" >6</text>
<text x="1140.45" textLength="25.80" lengthAdjust="spacing" y="275" font-size="8.6" fill="#fff" stroke="#fff" stroke-width="0.32" >GTX 12</text>
<text x="1243.35" textLength="12.00" lengthAdjust="spacing" y="275" font-size="8.6" fill="#fff" stroke="#fff" stroke-width="0.32" >0.5</text>
<text x="1057.50" text-anchor="middle" y="293" font-size="8.6" fill="#fff" stroke="#fff" stroke-width="0.32" >7</text>
<text x="1140.45" textLength="25.80" lengthAdjust="spacing" y="293" font-size="8.6" fill="#fff" stroke="#fff" stroke-width="0.32" >GTX 12</text>
<text x="1243.35" textLength="12.00" lengthAdjust="spacing" y="293" font-size="8.6" fill="#fff" stroke="#fff" stroke-width="0.32" >0.5</text>
<text x="1057.50" text-anchor="middle" y="310" font-size="8.6" fill="#fff" stroke="#fff" stroke-width="0.32" >8</text>
<text x="1140.45" textLength="25.80" lengthAdjust="spacing" y="310" font-size="8.6" fill="#fff" stroke="#fff" stroke-width="0.32" >GTX 12</text>
<text x="1243.35" textLength="12.00" lengthAdjust="spacing" y="310" font-size="8.6" fill="#fff" stroke="#fff" stroke-width="0.32" >0.5</text>
<text x="978.15" textLength="31.00" lengthAdjust="spacing" y="327" font-size="8.6" fill="#fff" stroke="#fff" stroke-width="0.32" >3° CART</text>
<text x="1057.50" text-anchor="middle" y="327" font-size="8.6" fill="#fff" stroke="#fff" stroke-width="0.32" >9</text>
<text x="1140.45" textLength="25.80" lengthAdjust="spacing" y="327" font-size="8.6" fill="#fff" stroke="#fff" stroke-width="0.32" >GTX 12</text>
<text x="1243.35" textLength="12.00" lengthAdjust="spacing" y="327" font-size="8.6" fill="#fff" stroke="#fff" stroke-width="0.32" >0.5</text>
<text x="1053.05" textLength="9.30" lengthAdjust="spacing" y="345" font-size="8.6" fill="#fff" stroke="#fff" stroke-width="0.32" >10</text>
<text x="1140.45" textLength="25.80" lengthAdjust="spacing" y="345" font-size="8.6" fill="#fff" stroke="#fff" stroke-width="0.32" >GTX 12</text>
<text x="1243.35" textLength="12.00" lengthAdjust="spacing" y="345" font-size="8.6" fill="#fff" stroke="#fff" stroke-width="0.32" >0.5</text>
<text x="1053.05" textLength="9.30" lengthAdjust="spacing" y="362" font-size="8.6" fill="#fff" stroke="#fff" stroke-width="0.32" >11</text>
<text x="1140.45" textLength="25.80" lengthAdjust="spacing" y="362" font-size="8.6" fill="#fff" stroke="#fff" stroke-width="0.32" >GTX 12</text>
<text x="1243.35" textLength="12.00" lengthAdjust="spacing" y="362" font-size="8.6" fill="#fff" stroke="#fff" stroke-width="0.32" >0.5</text>
<text x="1053.05" textLength="9.30" lengthAdjust="spacing" y="380" font-size="8.6" fill="#fff" stroke="#fff" stroke-width="0.32" >12</text>
<text x="1140.45" textLength="25.80" lengthAdjust="spacing" y="380" font-size="8.6" fill="#fff" stroke="#fff" stroke-width="0.32" >GTX 12</text>
<text x="1243.35" textLength="12.00" lengthAdjust="spacing" y="380" font-size="8.6" fill="#fff" stroke="#fff" stroke-width="0.32" >0.5</text>
<text x="978.15" textLength="31.00" lengthAdjust="spacing" y="397" font-size="8.6" fill="#fff" stroke="#fff" stroke-width="0.32" >4° CART</text>
<text x="1053.05" textLength="9.30" lengthAdjust="spacing" y="397" font-size="8.6" fill="#fff" stroke="#fff" stroke-width="0.32" >13</text>
<text x="1140.45" textLength="25.80" lengthAdjust="spacing" y="397" font-size="8.6" fill="#fff" stroke="#fff" stroke-width="0.32" >GTX 12</text>
<text x="1243.35" textLength="12.00" lengthAdjust="spacing" y="397" font-size="8.6" fill="#fff" stroke="#fff" stroke-width="0.32" >0.5</text>
<text x="1053.05" textLength="9.30" lengthAdjust="spacing" y="414" font-size="8.6" fill="#fff" stroke="#fff" stroke-width="0.32" >14</text>
<text x="1140.45" textLength="25.80" lengthAdjust="spacing" y="414" font-size="8.6" fill="#fff" stroke="#fff" stroke-width="0.32" >GTX 12</text>
<text x="1244.95" textLength="10.40" lengthAdjust="spacing" y="414" font-size="8.6" fill="#fff" stroke="#fff" stroke-width="0.32" >1.0</text>
<text x="1053.05" textLength="9.30" lengthAdjust="spacing" y="432" font-size="8.6" fill="#fff" stroke="#fff" stroke-width="0.32" >15</text>
<text x="1140.45" textLength="25.80" lengthAdjust="spacing" y="432" font-size="8.6" fill="#fff" stroke="#fff" stroke-width="0.32" >GTX 12</text>
<text x="1244.95" textLength="10.40" lengthAdjust="spacing" y="432" font-size="8.6" fill="#fff" stroke="#fff" stroke-width="0.32" >1.0</text>
<text x="1053.05" textLength="9.30" lengthAdjust="spacing" y="449" font-size="8.6" fill="#fff" stroke="#fff" stroke-width="0.32" >16</text>
<text x="1140.45" textLength="25.80" lengthAdjust="spacing" y="449" font-size="8.6" fill="#fff" stroke="#fff" stroke-width="0.32" >GTX 12</text>
<text x="1244.95" textLength="10.40" lengthAdjust="spacing" y="449" font-size="8.6" fill="#fff" stroke="#fff" stroke-width="0.32" >1.0</text>
<text x="978.15" textLength="31.00" lengthAdjust="spacing" y="466" font-size="8.6" fill="#fff" stroke="#fff" stroke-width="0.32" >5° CART</text>
<text x="1053.05" textLength="9.30" lengthAdjust="spacing" y="466" font-size="8.6" fill="#fff" stroke="#fff" stroke-width="0.32" >17</text>
<text x="1140.45" textLength="25.80" lengthAdjust="spacing" y="466" font-size="8.6" fill="#fff" stroke="#fff" stroke-width="0.32" >GTX 12</text>
<text x="1244.95" textLength="10.40" lengthAdjust="spacing" y="466" font-size="8.6" fill="#fff" stroke="#fff" stroke-width="0.32" >1.0</text>
<text x="1053.05" textLength="9.30" lengthAdjust="spacing" y="484" font-size="8.6" fill="#fff" stroke="#fff" stroke-width="0.32" >18</text>
<text x="1140.45" textLength="25.80" lengthAdjust="spacing" y="484" font-size="8.6" fill="#fff" stroke="#fff" stroke-width="0.32" >GTX 12</text>
<text x="1243.35" textLength="12.00" lengthAdjust="spacing" y="484" font-size="8.6" fill="#fff" stroke="#fff" stroke-width="0.32" >2.0</text>
<text x="1053.05" textLength="9.30" lengthAdjust="spacing" y="501" font-size="8.6" fill="#fff" stroke="#fff" stroke-width="0.32" >19</text>
<text x="1140.45" textLength="25.80" lengthAdjust="spacing" y="501" font-size="8.6" fill="#fff" stroke="#fff" stroke-width="0.32" >GTX 12</text>
<text x="1243.35" textLength="12.00" lengthAdjust="spacing" y="501" font-size="8.6" fill="#fff" stroke="#fff" stroke-width="0.32" >2.0</text>
<text x="1052.05" textLength="10.30" lengthAdjust="spacing" y="518" font-size="8.6" fill="#fff" stroke="#fff" stroke-width="0.32" >20</text>
<text x="1140.45" textLength="25.80" lengthAdjust="spacing" y="518" font-size="8.6" fill="#fff" stroke="#fff" stroke-width="0.32" >GTX 12</text>
<text x="1243.35" textLength="12.00" lengthAdjust="spacing" y="518" font-size="8.6" fill="#fff" stroke="#fff" stroke-width="0.32" >3.0</text>
<text x="978.15" textLength="31.00" lengthAdjust="spacing" y="536" font-size="8.6" fill="#fff" stroke="#fff" stroke-width="0.32" >6° CART</text>
<text x="1052.05" textLength="10.30" lengthAdjust="spacing" y="536" font-size="8.6" fill="#fff" stroke="#fff" stroke-width="0.32" >21</text>
<text x="1140.45" textLength="25.80" lengthAdjust="spacing" y="536" font-size="8.6" fill="#fff" stroke="#fff" stroke-width="0.32" >GTX 12</text>
<text x="1243.35" textLength="12.00" lengthAdjust="spacing" y="536" font-size="8.6" fill="#fff" stroke="#fff" stroke-width="0.32" >3.0</text>
<text x="1052.05" textLength="10.30" lengthAdjust="spacing" y="553" font-size="8.6" fill="#fff" stroke="#fff" stroke-width="0.32" >22</text>
<text x="1140.45" textLength="25.80" lengthAdjust="spacing" y="553" font-size="8.6" fill="#fff" stroke="#fff" stroke-width="0.32" >GTX 12</text>
<text x="1243.35" textLength="12.00" lengthAdjust="spacing" y="553" font-size="8.6" fill="#fff" stroke="#fff" stroke-width="0.32" >3.0</text>
<text x="1052.05" textLength="10.30" lengthAdjust="spacing" y="571" font-size="8.6" fill="#fff" stroke="#fff" stroke-width="0.32" >23</text>
<text x="1140.45" textLength="25.80" lengthAdjust="spacing" y="571" font-size="8.6" fill="#fff" stroke="#fff" stroke-width="0.32" >GTX 12</text>
<text x="1243.35" textLength="12.00" lengthAdjust="spacing" y="571" font-size="8.6" fill="#fff" stroke="#fff" stroke-width="0.32" >3.0</text>
<text x="1052.05" textLength="10.30" lengthAdjust="spacing" y="588" font-size="8.6" fill="#fff" stroke="#fff" stroke-width="0.32" >24</text>
<text x="1140.45" textLength="25.80" lengthAdjust="spacing" y="588" font-size="8.6" fill="#fff" stroke="#fff" stroke-width="0.32" >GTX 12</text>
<text x="1243.35" textLength="12.00" lengthAdjust="spacing" y="588" font-size="8.6" fill="#fff" stroke="#fff" stroke-width="0.32" >4.0</text>
<text x="1071.65" textLength="84.40" lengthAdjust="spacing" y="617" font-size="8.4" fill="#fff" stroke="#fff" stroke-width="0.32" >Export presets for RDNet</text>
<text x="1086.65" textLength="54.50" lengthAdjust="spacing" y="644" font-size="8.4" fill="#fff" stroke="#fff" stroke-width="0.32" >Export STEP file</text>
</svg>
</div></body></html>
